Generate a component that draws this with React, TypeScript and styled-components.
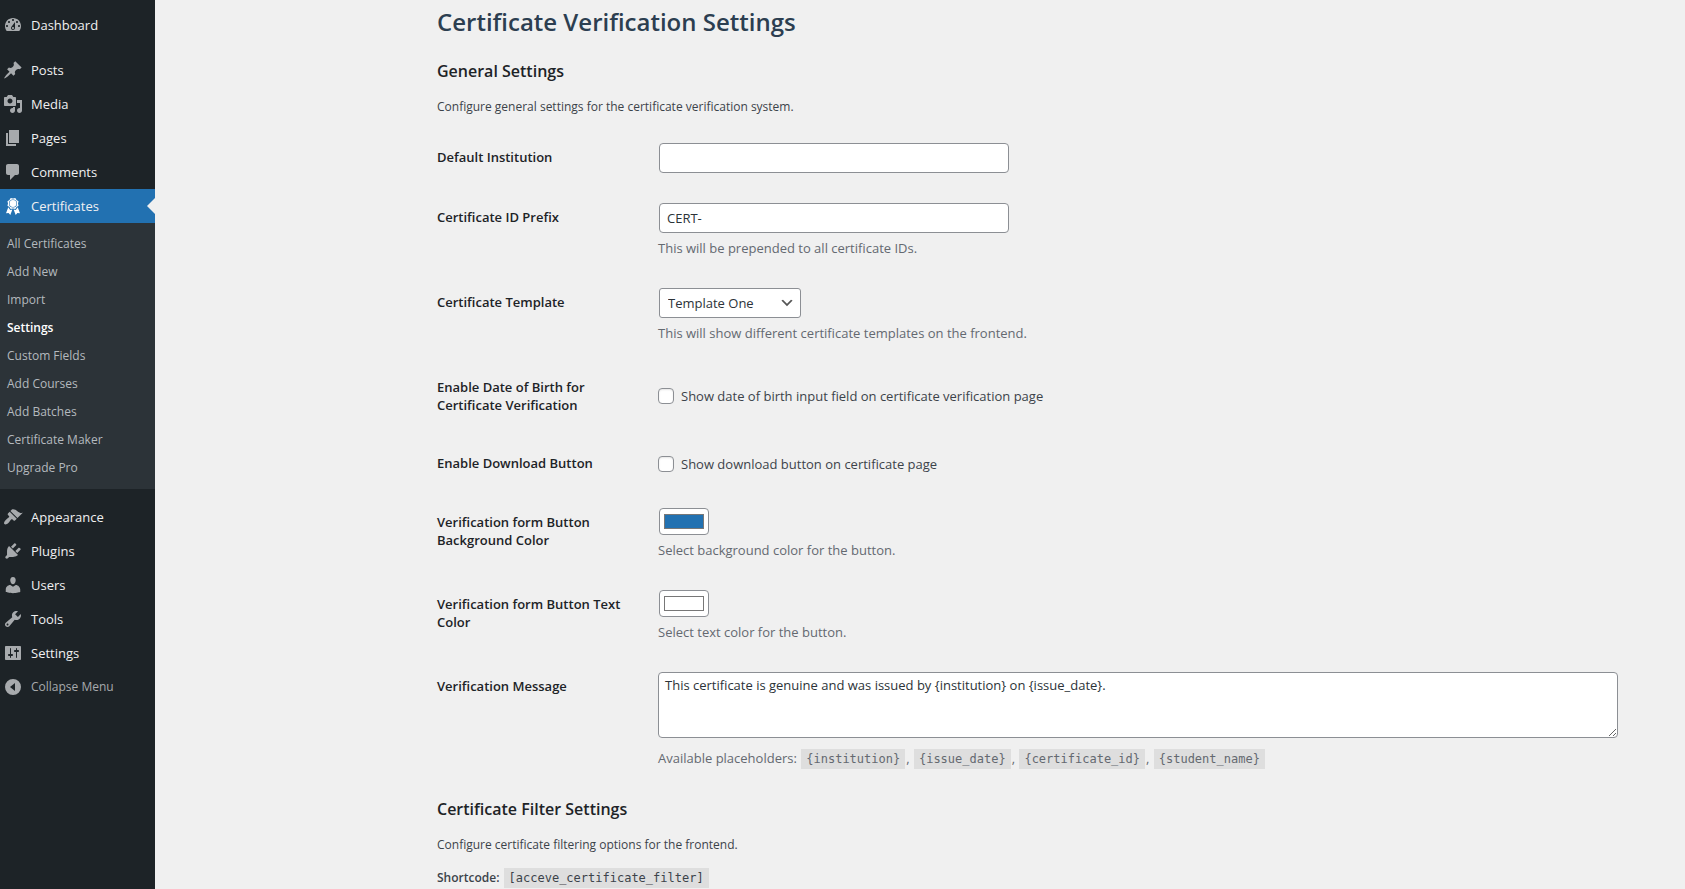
import React from 'react';
import styled, { createGlobalStyle } from 'styled-components';

const GlobalStyle = createGlobalStyle`
  *, *::before, *::after { box-sizing: border-box; }
  body {
    margin: 0;
    background: #f0f0f0;
    color: #3c434a;
    font-family: "Open Sans", "Noto Sans", sans-serif;
    font-size: 13px;
    line-height: 20px;
  }
`;

const Page = styled.div`
  display: flex;
  min-height: 100vh;
`;

const Sidebar = styled.nav`
  flex: 0 0 155px;
  padding-top: 8px;
  background: #1d2327;
`;

const MenuGroup = styled.ul`
  margin: 0 0 11px;
  padding: 0;
  list-style: none;
`;

const MenuLink = styled.a<{ $active?: boolean }>`
  position: relative;
  display: flex;
  align-items: center;
  gap: 8px;
  height: 34px;
  padding-left: 3px;
  background: ${(p) => (p.$active ? '#2271b1' : 'transparent')};
  color: #f0f0f1;
  text-decoration: none;

  svg {
    fill: ${(p) => (p.$active ? '#ffffff' : '#a7aaad')};
  }

  &::after {
    content: '';
    display: ${(p) => (p.$active ? 'block' : 'none')};
    position: absolute;
    top: 9px;
    right: 0;
    border: 8px solid transparent;
    border-left-width: 0;
    border-right-color: #f0f0f0;
  }
`;

const CollapseButton = styled.button`
  display: flex;
  align-items: center;
  gap: 8px;
  width: 100%;
  height: 34px;
  padding: 0 0 0 3px;
  border: 0;
  background: none;
  color: #a7aaad;
  font: inherit;
  font-size: 12px;
  cursor: pointer;

  svg { fill: #a7aaad; }
`;

const MenuIcon = styled.svg`
  flex: none;
  width: 20px;
  height: 20px;
`;

const Submenu = styled.ul`
  margin: 0;
  padding: 7px 0;
  background: #2c3338;
  list-style: none;
`;

const SubmenuLink = styled.a<{ $current?: boolean }>`
  display: block;
  padding: 4px 7px;
  color: ${(p) => (p.$current ? '#ffffff' : '#b4b9be')};
  font-size: 12px;
  font-weight: ${(p) => (p.$current ? 600 : 400)};
  text-decoration: none;
`;

const Content = styled.main`
  flex: 1;
  min-width: 0;
  padding: 6px 57px 0 282px;
`;

const Title = styled.h1`
  margin: 0 0 21px;
  color: #2c3e50;
  font-size: 24px;
  font-weight: 600;
  line-height: 32px;
`;

const SectionTitle = styled.h2`
  margin: 0 0 13px;
  color: #1d2327;
  font-size: 16px;
  font-weight: 600;
  line-height: 24px;
`;

const Text = styled.p`
  margin: 0 0 10px;
  font-size: 12px;
  line-height: 22px;
`;

const Shortcode = styled.div`
  margin-top: 12px;
  font-size: 12px;

  strong { font-weight: 600; }
`;

const Fields = styled.div`
  margin-bottom: 13px;
`;

const Row = styled.div`
  display: grid;
  grid-template-columns: 210px minmax(0, 1fr);
`;

const RowHead = styled.div`
  padding: 20px 20px 20px 0;
  color: #1d2327;
  font-weight: 600;
  line-height: 18px;
`;

const RowBody = styled.div`
  align-self: center;
  padding: 15px 10px 15px 11px;
`;

const Help = styled.p<{ $wide?: boolean }>`
  margin: ${(p) => (p.$wide ? '10px' : '5px')} 0 0;
  color: #646970;
  line-height: 20px;
`;

const TextInput = styled.input`
  display: block;
  width: 350px;
  max-width: 100%;
  height: 30px;
  margin: 0 1px;
  padding: 0 7px;
  border: 1px solid #8c8f94;
  border-radius: 4px;
  background: #fff;
  color: #2c3338;
  font: inherit;
`;

const SelectWrap = styled.div`
  position: relative;
  width: 142px;
  margin: 0 1px;

  svg {
    position: absolute;
    top: 7px;
    right: 6px;
    width: 16px;
    height: 16px;
    pointer-events: none;
  }
`;

const Select = styled.select`
  display: block;
  width: 100%;
  height: 30px;
  padding: 0 24px 0 8px;
  border: 1px solid #8c8f94;
  border-radius: 3px;
  appearance: none;
  background: #fff;
  color: #2c3338;
  font: inherit;
`;

const CheckLabel = styled.label`
  display: flex;
  align-items: center;
  gap: 7px;
  min-height: 29px;
`;

const Checkbox = styled.input`
  flex: none;
  width: 16px;
  height: 16px;
  margin: 0;
  border: 1px solid #8c8f94;
  border-radius: 4px;
  appearance: none;
  background: #fff;
  box-shadow: inset 0 1px 2px rgba(0, 0, 0, 0.1);

  &:checked { background: #2271b1; }
`;

const ColorInput = styled.input`
  display: block;
  width: 50px;
  height: 27px;
  margin: 0 1px;
  padding: 1px 2px;
  border: 1px solid #8c8f94;
  border-radius: 4px;
  background: #fff;
`;

const TextArea = styled.textarea`
  display: block;
  width: 100%;
  height: 66px;
  padding: 2px 6px;
  border: 1px solid #8c8f94;
  border-radius: 4px;
  background: #fff;
  color: #2c3338;
  font: inherit;
  line-height: 20px;
`;

const Code = styled.code`
  margin: 0 1px;
  padding: 3px 5px;
  background: #dedede;
  font-family: "DejaVu Sans Mono", monospace;
  font-size: 12px;
`;

const icons: Record<string, string> = {
  dashboard:
    'M3.76 16h12.48c1.1-1.37 1.76-3.11 1.76-5 0-4.42-3.58-8-8-8s-8 3.58-8 8c0 1.89.66 3.63 1.76 5zM10 4c.55 0 1 .45 1 1s-.45 1-1 1-1-.45-1-1 .45-1 1-1zM6 6c.55 0 1 .45 1 1s-.45 1-1 1-1-.45-1-1 .45-1 1-1zm8 0c.55 0 1 .45 1 1s-.45 1-1 1-1-.45-1-1 .45-1 1-1zm-5.37 5.55L12 7v6c0 1.1-.9 2-2 2s-2-.9-2-2c0-.57.24-1.08.63-1.45zM4 10c.55 0 1 .45 1 1s-.45 1-1 1-1-.45-1-1 .45-1 1-1zm12 0c.55 0 1 .45 1 1s-.45 1-1 1-1-.45-1-1 .45-1 1-1zm-5 3c0-.55-.45-1-1-1s-1 .45-1 1 .45 1 1 1 1-.45 1-1z',
  posts:
    'M10.44 3.02l1.82-1.82 6.36 6.35-1.83 1.82c-1.05-.68-2.48-.57-3.41.36l-.75.75c-.92.93-1.04 2.35-.35 3.41l-1.83 1.82-2.41-2.41-2.8 2.79c-.42.42-3.38 2.71-3.8 2.29s1.86-3.39 2.28-3.81l2.79-2.79L4.1 9.36l1.83-1.82c1.05.69 2.48.57 3.4-.36l.75-.75c.93-.92 1.05-2.35.36-3.41z',
  media:
    'M13 11V4c0-.55-.45-1-1-1h-1.67L9 1H5L3.67 3H2c-.55 0-1 .45-1 1v7c0 .55.45 1 1 1h10c.55 0 1-.45 1-1zM7 4.5c1.38 0 2.5 1.12 2.5 2.5S8.38 9.5 7 9.5 4.5 8.38 4.5 7 5.62 4.5 7 4.5zM14 6h5v10.5c0 1.38-1.12 2.5-2.5 2.5S14 17.88 14 16.5s1.12-2.5 2.5-2.5c.17 0 .34.02.5.05V9h-3V6zm-4 8.05V13h2v3.5c0 1.38-1.12 2.5-2.5 2.5S7 17.88 7 16.5 8.12 14 9.5 14c.17 0 .34.02.5.05z',
  pages: 'M6 15V2h10v13H6zm-1 1h8v2H3V5h2v11z',
  comments:
    'M5 2h9c1.1 0 2 .9 2 2v7c0 1.1-.9 2-2 2h-2l-5 5v-5H5c-1.1 0-2-.9-2-2V4c0-1.1.9-2 2-2z',
  awards:
    'M4.46 5.16L5 7.46l-.54 2.29 2.01 1.24L7.7 13l2.3-.54 2.3.54 1.23-2.01 2.01-1.24L15 7.46l.54-2.3-2-1.24-1.24-2.01-2.3.55-2.29-.54-1.25 2zM10 3.4a4.05 4.05 0 1 1 0 8.1 4.05 4.05 0 0 1 0-8.1zM10 4a3.45 3.45 0 1 0 0 6.9 3.45 3.45 0 0 0 0-6.9zM5.3 11.3L3 17.2l2.6-.3 1.7 2L9.4 13.6l-2.2.5zM14.7 11.3l2.3 5.9-2.6-.3-1.7 2-2.1-5.3 2.2.5z',
  appearance:
    'M14.48 11.06L7.41 3.99l1.5-1.5c.5-.56 2.3-.47 3.51.32 1.21.8 1.43 1.28 2.91 2.1 1.18.64 2.45 1.26 4.45.85zm-.71.71L6.7 4.7 4.93 6.47c-.39.39-.39 1.02 0 1.41l1.06 1.06c.39.39.39 1.03 0 1.42-.6.6-1.43 1.11-2.21 1.69-.35.26-.7.53-1.01.84C1.43 14.23.4 16.08 1.4 17.07c.99 1 2.84-.03 4.18-1.36.31-.31.58-.66.85-1.02.57-.78 1.08-1.61 1.69-2.21.39-.39 1.02-.39 1.41 0l1.06 1.06c.39.39 1.02.39 1.41 0z',
  plugins:
    'M13.11 4.36L9.87 7.6 8 5.73l3.24-3.24c.35-.34 1.05-.2 1.56.32.52.51.66 1.21.31 1.55zm-8 1.77l.91-1.12 9.01 9.01-1.19.84c-.71.71-2.63 1.16-3.82 1.16H6.14L4.9 17.26c-.59.59-1.54.59-2.12 0-.59-.58-.59-1.53 0-2.12l1.24-1.24v-3.88c0-1.13.4-3.19 1.09-3.89zm7.26 3.97l3.24-3.24c.34-.35 1.04-.21 1.55.31.52.51.66 1.21.31 1.55l-3.24 3.25z',
  users:
    'M10 9.25c-2.27 0-2.73-3.44-2.73-3.44C7 4.02 7.82 2 9.97 2c2.16 0 2.98 2.02 2.71 3.81 0 0-.41 3.44-2.68 3.44zm0 2.57L12.72 10c2.39 0 4.52 2.33 4.52 4.53v2.49s-3.65 1.13-7.24 1.13c-3.65 0-7.24-1.13-7.24-1.13v-2.49c0-2.25 1.94-4.48 4.47-4.48z',
  tools:
    'M16.68 9.77c-1.34 1.34-3.3 1.67-4.95.99l-5.41 6.52c-.99.99-2.59.99-3.58 0s-.99-2.59 0-3.57l6.52-5.42c-.68-1.65-.35-3.61.99-4.95 1.28-1.28 3.12-1.62 4.72-1.06l-2.89 2.89 2.82 2.82 2.86-2.87c.53 1.58.18 3.39-1.08 4.65zM3.81 16.21c.4.39 1.04.39 1.43 0 .4-.4.4-1.04 0-1.43-.39-.4-1.03-.4-1.43 0-.39.39-.39 1.03 0 1.43z',
  settings:
    'M18 16V4c0-.55-.45-1-1-1H3c-.55 0-1 .45-1 1v12c0 .55.45 1 1 1h14c.55 0 1-.45 1-1zM8 11h1c.55 0 1 .45 1 1s-.45 1-1 1H8v1.5c0 .28-.22.5-.5.5s-.5-.22-.5-.5V13H6c-.55 0-1-.45-1-1s.45-1 1-1h1V5.5c0-.28.22-.5.5-.5s.5.22.5.5V11zm5-2h-1c-.55 0-1-.45-1-1s.45-1 1-1h1V5.5c0-.28.22-.5.5-.5s.5.22.5.5V7h1c.55 0 1 .45 1 1s-.45 1-1 1h-1v5.5c0 .28-.22.5-.5.5s-.5-.22-.5-.5V9z',
  collapse: 'M10 2a8 8 0 1 0 0 16 8 8 0 0 0 0-16zM12 6v8l-5-4z',
};

const Icon = ({ name }: { name: string }) => (
  <MenuIcon viewBox="0 0 20 20" aria-hidden="true">
    <path fillRule="evenodd" d={icons[name]} />
  </MenuIcon>
);

const MenuItem = ({ icon, label, active, children }: {
  icon: string;
  label: string;
  active?: boolean;
  children?: React.ReactNode;
}) => (
  <li>
    <MenuLink href="#" $active={active}>
      <Icon name={icon} />
      {label}
    </MenuLink>
    {children}
  </li>
);

const submenu = [
  'All Certificates', 'Add New', 'Import', 'Settings', 'Custom Fields',
  'Add Courses', 'Add Batches', 'Certificate Maker', 'Upgrade Pro',
];

const Field = ({ id, label, children }: {
  id: string;
  label: string;
  children: React.ReactNode;
}) => (
  <Row>
    <RowHead><label htmlFor={id}>{label}</label></RowHead>
    <RowBody>{children}</RowBody>
  </Row>
);

export default function App() {
  return (
    <Page>
      <GlobalStyle />
      <Sidebar aria-label="Main menu">
        <MenuGroup>
          <MenuItem icon="dashboard" label="Dashboard" />
        </MenuGroup>
        <MenuGroup>
          <MenuItem icon="posts" label="Posts" />
          <MenuItem icon="media" label="Media" />
          <MenuItem icon="pages" label="Pages" />
          <MenuItem icon="comments" label="Comments" />
          <MenuItem icon="awards" label="Certificates" active>
            <Submenu>
              {submenu.map((item) => (
                <li key={item}>
                  <SubmenuLink href="#" $current={item === 'Settings'}>{item}</SubmenuLink>
                </li>
              ))}
            </Submenu>
          </MenuItem>
        </MenuGroup>
        <MenuGroup>
          <MenuItem icon="appearance" label="Appearance" />
          <MenuItem icon="plugins" label="Plugins" />
          <MenuItem icon="users" label="Users" />
          <MenuItem icon="tools" label="Tools" />
          <MenuItem icon="settings" label="Settings" />
          <li>
            <CollapseButton type="button">
              <Icon name="collapse" />
              Collapse Menu
            </CollapseButton>
          </li>
        </MenuGroup>
      </Sidebar>

      <Content>
        <Title>Certificate Verification Settings</Title>

        <SectionTitle>General Settings</SectionTitle>
        <Text>Configure general settings for the certificate verification system.</Text>

        <Fields>
          <Field id="institution" label="Default Institution">
            <TextInput id="institution" type="text" />
          </Field>
          <Field id="prefix" label="Certificate ID Prefix">
            <TextInput id="prefix" type="text" defaultValue="CERT-" />
            <Help>This will be prepended to all certificate IDs.</Help>
          </Field>
          <Field id="template" label="Certificate Template">
            <SelectWrap>
              <Select id="template">
                <option>Template One</option>
              </Select>
              <svg viewBox="0 0 20 20" aria-hidden="true">
                <path d="M5 6l5 5 5-5 2 1-7 7-7-7 2-1z" fill="#555" />
              </svg>
            </SelectWrap>
            <Help>This will show different certificate templates on the frontend.</Help>
          </Field>
          <Field id="dob" label="Enable Date of Birth for Certificate Verification">
            <CheckLabel>
              <Checkbox id="dob" type="checkbox" />
              Show date of birth input field on certificate verification page
            </CheckLabel>
          </Field>
          <Field id="download" label="Enable Download Button">
            <CheckLabel>
              <Checkbox id="download" type="checkbox" />
              Show download button on certificate page
            </CheckLabel>
          </Field>
          <Field id="bg-color" label="Verification form Button Background Color">
            <ColorInput id="bg-color" type="color" defaultValue="#2271b1" />
            <Help>Select background color for the button.</Help>
          </Field>
          <Field id="text-color" label="Verification form Button Text Color">
            <ColorInput id="text-color" type="color" defaultValue="#ffffff" />
            <Help>Select text color for the button.</Help>
          </Field>
          <Field id="message" label="Verification Message">
            <TextArea
              id="message"
              defaultValue="This certificate is genuine and was issued by {institution} on {issue_date}."
            />
            <Help $wide>
              Available placeholders: <Code>{'{institution}'}</Code>, <Code>{'{issue_date}'}</Code>,{' '}
              <Code>{'{certificate_id}'}</Code>, <Code>{'{student_name}'}</Code>
            </Help>
          </Field>
        </Fields>

        <SectionTitle>Certificate Filter Settings</SectionTitle>
        <Text>Configure certificate filtering options for the frontend.</Text>
        <Shortcode>
          <strong>Shortcode:</strong> <Code>[acceve_certificate_filter]</Code>
        </Shortcode>
      </Content>
    </Page>
  );
}
